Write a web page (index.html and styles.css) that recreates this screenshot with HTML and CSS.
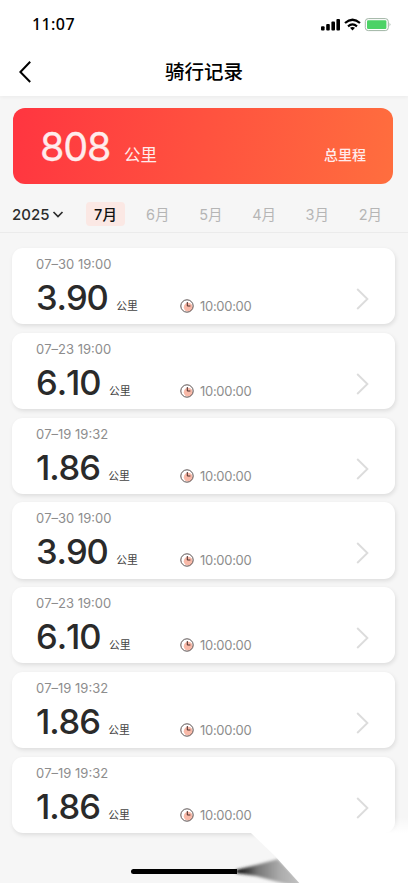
FILE: index.html
```html
<!DOCTYPE html>
<html lang="zh-CN">
<head>
    <meta charset="UTF-8">
    <meta name="viewport" content="width=device-width, initial-scale=1.0">
    <title>骑行记录</title>
    <link rel="stylesheet" href="styles.css">
</head>
<body>

<div class="app">
    <header class="header">
        <div class="status">
            <span class="clock">11:07</span>
            <svg class="status-icons" width="72" height="16" viewBox="0 0 72 16">
                <!-- señal -->
                <rect x="1" y="10.2" width="3.6" height="4.2" rx="1"/>
                <rect x="6.2" y="8" width="3.6" height="6.4" rx="1"/>
                <rect x="11.4" y="5.6" width="3.6" height="8.8" rx="1"/>
                <rect x="16.4" y="3" width="3.6" height="11.4" rx="1"/>
                <!-- wifi -->
                <path d="M25 7 Q32.5 0.6 40 7" fill="none" stroke="#000" stroke-width="2.3"/>
                <path d="M28 10.3 Q32.5 6.6 37 10.3" fill="none" stroke="#000" stroke-width="2.2"/>
                <path d="M30 11.8 Q32.5 10.2 35 11.8 L32.5 14.4 Z"/>
                <!-- batería -->
                <rect x="45.3" y="2.6" width="23" height="12" rx="3" fill="#fff" stroke="#9fb4a4" stroke-width="1"/>
                <rect x="47" y="4.3" width="19.4" height="8.6" rx="1.2" fill="#4cd266"/>
                <path d="M69.7 6.8 Q71.2 8.6 69.7 10.4 Z" fill="#8aa08e"/>
            </svg>
        </div>
        <div class="nav">
            <svg class="back" width="14" height="24" viewBox="0 0 14 24">
                <path d="M12.2 1.8 L2.4 12 L12.2 22"/>
            </svg>
            <h1 class="title">骑行记录</h1>
        </div>
    </header>

    <section class="total">
        <span class="total-value">808</span>
        <span class="total-unit">公里</span>
        <span class="total-label">总里程</span>
    </section>

    <nav class="filter">
        <div class="year">2025
            <svg width="12" height="9" viewBox="0 0 12 9"><path d="M1.5 2 L6 6.5 L10.5 2"/></svg>
        </div>
        <div class="month active">7月</div>
        <div class="month">6月</div>
        <div class="month">5月</div>
        <div class="month">4月</div>
        <div class="month">3月</div>
        <div class="month">2月</div>
    </nav>

    <main class="list" id="list"></main>

    <div class="home-bar"></div>

    <svg class="corner" width="180" height="70" viewBox="0 0 180 70">
        <defs>
            <linearGradient id="fade" x1="0" y1="0" x2="0" y2="1">
                <stop offset="0" stop-color="#fff" stop-opacity="0"/>
                <stop offset="1" stop-color="#fff"/>
            </linearGradient>
            <linearGradient id="smear" x1="0" y1="0" x2="1" y2="0">
                <stop offset="0" stop-color="#000"/>
                <stop offset="0.3" stop-color="#777"/>
                <stop offset="0.6" stop-color="#aaa"/>
                <stop offset="1" stop-color="#ccc"/>
            </linearGradient>
            <filter id="soft" x="-20%" y="-40%" width="140%" height="180%">
                <feGaussianBlur stdDeviation="1.8"/>
            </filter>
            <filter id="edge" x="-5%" y="-5%" width="110%" height="110%">
                <feGaussianBlur stdDeviation="0.7"/>
            </filter>
        </defs>
        <path d="M8 57 L28 52 L50 46 L80 76 L54 70 L28 63 L8 60 Z" fill="url(#smear)" filter="url(#soft)"/>
        <path d="M9 6 L24 21 L47 43 L74 73 H190 V20 H40 L24 10 Z" fill="#fff" filter="url(#edge)"/>
        <path d="M130 4 H180 V20 H130 Z" fill="url(#fade)"/>
    </svg>
</div>

<script>
    const rides = [
        { date: '07–30 19:00', km: '3.90', time: '10:00:00' },
        { date: '07–23 19:00', km: '6.10', time: '10:00:00' },
        { date: '07–19 19:32', km: '1.86', time: '10:00:00' },
        { date: '07–30 19:00', km: '3.90', time: '10:00:00' },
        { date: '07–23 19:00', km: '6.10', time: '10:00:00' },
        { date: '07–19 19:32', km: '1.86', time: '10:00:00' },
        { date: '07–19 19:32', km: '1.86', time: '10:00:00' }
    ];

    document.getElementById('list').innerHTML = rides.map(ride => `
        <article class="card">
            <div class="date">${ride.date}</div>
            <div class="distance"><span class="km">${ride.km}</span><span class="unit">公里</span></div>
            <div class="duration">
                <svg width="14" height="14" viewBox="0 0 14 14">
                    <circle cx="8.2" cy="8.2" r="4.4" fill="#f8b9a8"/>
                    <circle cx="7" cy="7" r="6.2" fill="none" stroke="#4a4040" stroke-width="0.9"/>
                    <path d="M7.3 3 V7 H10.4" fill="none" stroke="#4a2c2a" stroke-width="1"/>
                </svg>
                <span>${ride.time}</span>
            </div>
            <svg class="arrow" width="13" height="24" viewBox="0 0 13 24"><path d="M1.2 2 L11.4 12 L1.2 22"/></svg>
        </article>`).join('');
</script>

</body>
</html>
```

FILE: styles.css
```css
* {
    box-sizing: border-box;
}

body {
    margin: 0;
    background: #f6f6f6;
    font-family: Inter, "Noto Sans CJK SC", sans-serif;
}

.app {
    position: relative;
    width: 408px;
    height: 883px;
    overflow: hidden;
}

.header {
    height: 96px;
    background: #fff;
    box-shadow: 0 1px 4px rgba(0, 0, 0, 0.05);
}

.status {
    display: flex;
    justify-content: space-between;
    height: 48px;
    padding: 16px 16px 0 32px;
}

.clock {
    font: 500 16px/16px "Noto Sans", sans-serif;
    letter-spacing: 0.4px;
}

.nav {
    display: flex;
    align-items: center;
    height: 48px;
    padding-left: 18px;
}

.back path {
    fill: none;
    stroke: #000;
    stroke-width: 2;
}

.title {
    flex: 1;
    margin: -2px 32px 0 0;
    text-align: center;
    font: 500 19.5px/28px "Noto Sans CJK SC", sans-serif;
}

.total {
    display: flex;
    align-items: baseline;
    height: 76px;
    margin: 12px 15px 0 13px;
    padding: 15px 27px 0;
    border-radius: 12px;
    background: linear-gradient(100deg, #ff3540, #ff523f 50%, #ff6e3e);
    color: #ffecec;
}

.total-value {
    width: 70px;
    font-size: 39.5px;
    line-height: 48px;
    font-weight: 400;
    letter-spacing: -1.2px;
    -webkit-text-stroke: 0.3px #ffecec;
}

.total-unit {
    margin-left: 14px;
    font-size: 16.5px;
}

.total-label {
    margin-left: auto;
    font-size: 14px;
    font-weight: 500;
    line-height: 20px;
    transform: translateY(-1px);
}

.filter {
    display: flex;
    align-items: center;
    height: 49px;
    padding: 12px 0 0 12px;
    border-bottom: 1px solid #ebebeb;
}

.year {
    display: flex;
    align-items: center;
    gap: 3px;
    width: 74px;
    font-size: 15px;
    font-weight: 500;
    color: #2c2c2c;
}

.year path {
    fill: none;
    stroke: #2c2c2c;
    stroke-width: 1.7;
}

.month {
    width: 39px;
    height: 24px;
    margin-right: 14.2px;
    border-radius: 4px;
    text-align: center;
    font-size: 14.5px;
    line-height: 26px;
    color: #b5b5b5;
}

.month.active {
    background: #fbe8e4;
    color: #111;
    font-weight: 500;
}

.month:not(.active) {
    transform: translateX(-1px);
}

.list {
    display: flex;
    flex-direction: column;
    gap: 8.5px;
    padding: 15px 13px 0 12px;
}

.card {
    display: grid;
    grid-template-columns: 144px 1fr 13px;
    grid-template-rows: 17px 1fr;
    height: 76.3px;
    padding: 8px 26px 0 24px;
    border-radius: 11px;
    background: #fff;
    box-shadow: 1px 2px 4px rgba(0, 0, 0, 0.1);
}

.date {
    grid-column: 1 / 4;
    font-size: 13px;
    line-height: 17px;
    letter-spacing: 0;
    font-kerning: none;
    color: #8d8d8d;
}

.distance {
    display: flex;
    align-items: baseline;
    height: 50px;
    color: #2a2a2a;
}

.km {
    font-size: 34.5px;
    line-height: 50px;
    font-weight: 500;
    letter-spacing: -1.1px;
    font-kerning: none;
}

.unit {
    margin-left: 8.5px;
    font-size: 10.8px;
    color: #444;
}

.duration {
    display: flex;
    align-items: center;
    gap: 6px;
    height: 16px;
    margin-top: 25px;
    font-size: 13px;
    letter-spacing: -0.3px;
    color: #8d8d8d;
}

.arrow {
    margin-top: 14px;
}

.arrow path {
    fill: none;
    stroke: #dcdcdc;
    stroke-width: 1.9;
}

.home-bar {
    position: absolute;
    left: 131px;
    top: 869px;
    width: 106px;
    height: 5px;
    border-radius: 3px 0 0 3px;
    background: #000;
}

.corner {
    position: absolute;
    left: 228px;
    top: 813px;
}
```
